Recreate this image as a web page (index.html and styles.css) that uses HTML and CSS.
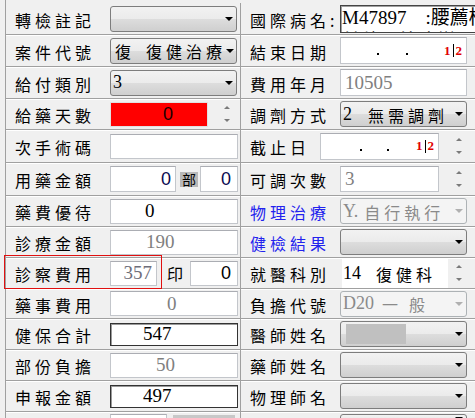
FILE: index.html
```html
<!DOCTYPE html>
<html lang="zh-Hant">
<head>
<meta charset="utf-8">
<link rel="stylesheet" href="styles.css">
</head>
<body>
<div class="form">
  <!-- row 1 -->
  <div class="cell l"><span class="lab">轉檢註記</span><div class="combo"><i class="arr"></i></div></div>
  <div class="cell r"><span class="lab">國際病名:</span><div class="memo">M47897    :腰薦椎
其他關節病變</div></div>
  <!-- row 2 -->
  <div class="cell l"><span class="lab">案件代號</span><div class="combo"><span class="cj">復</span><span class="cj sp">復健治療</span><i class="arr"></i></div></div>
  <div class="cell r"><span class="lab">結束日期</span><div class="in date w127"><i class="dot d1"></i><i class="dot d2"></i><span class="mark"><b>1</b><i class="ibeam"></i><b>2</b></span></div></div>
  <!-- row 3 -->
  <div class="cell l"><span class="lab">給付類別</span><div class="combo"><span class="num">3</span><i class="arr"></i></div></div>
  <div class="cell r"><span class="lab">費用年月</span><div class="in w127 gray pl4">10505</div></div>
  <!-- row 4 -->
  <div class="cell l"><span class="lab">給藥天數</span><div class="in red">0</div><div class="spin"><i class="up"></i><i class="dn"></i></div></div>
  <div class="cell r"><span class="lab">調劑方式</span><div class="combo"><span class="num">2</span><span class="cj sp2">無需調劑</span><i class="arr"></i></div></div>
  <!-- row 5 -->
  <div class="cell l"><span class="lab">次手術碼</span><div class="in w128"></div></div>
  <div class="cell r"><span class="lab short">截止日</span><div class="in date w119"><i class="dot d3"></i><i class="dot d4"></i><span class="mark"><b>1</b><i class="ibeam"></i><b>2</b></span></div><div class="spin sr"><i class="up"></i><i class="dn"></i></div></div>
  <!-- row 6 -->
  <div class="cell l"><span class="lab">用藥金額</span><div class="in sans navy w66 end">0</div><span class="bu">部</span><div class="in sans navy w38 end pr6">0</div></div>
  <div class="cell r"><span class="lab">可調次數</span><div class="in w99 gray pl4">3</div><div class="spin sr"><i class="up"></i><i class="dn"></i></div></div>
  <!-- row 7 -->
  <div class="cell l"><span class="lab">藥費優待</span><div class="in w128 pl34">0</div></div>
  <div class="cell r"><span class="lab blue">物理治療</span><div class="combo dis"><span class="num">Y.</span><span class="cj sp3">自行執行</span><i class="arr"></i></div></div>
  <!-- row 8 -->
  <div class="cell l"><span class="lab">診療金額</span><div class="in w128 gray pl35">190</div></div>
  <div class="cell r"><span class="lab blue">健檢結果</span><div class="combo"><i class="arr"></i></div></div>
  <!-- row 9 -->
  <div class="cell l"><span class="hl"></span><span class="lab">診察費用</span><div class="in w47 gray2 end">357</div><span class="yin">印</span><div class="in sans w48 end pr6">0</div></div>
  <div class="cell r"><span class="lab">就醫科別</span><div class="list"><span class="num">14</span><span class="cj sp4">復健科</span></div><div class="spin sr2"><i class="up"></i><i class="dn"></i></div></div>
  <!-- row 10 -->
  <div class="cell l"><span class="lab">藥事費用</span><div class="in w128 gray pl57">0</div></div>
  <div class="cell r"><span class="lab">負擔代號</span><div class="combo dis"><span class="num">D20</span><span class="cj sp5">一般</span><i class="arr"></i></div></div>
  <!-- row 11 -->
  <div class="cell l"><span class="lab">健保合計</span><div class="in dark w128 pl33">547</div></div>
  <div class="cell r"><span class="lab">醫師姓名</span><div class="combo"><span class="redact"></span><i class="arr"></i></div></div>
  <!-- row 12 -->
  <div class="cell l"><span class="lab">部份負擔</span><div class="in w128 gray pl45">50</div></div>
  <div class="cell r"><span class="lab">藥師姓名</span><div class="combo"><i class="arr"></i></div></div>
  <!-- row 13 -->
  <div class="cell l"><span class="lab">申報金額</span><div class="in dark w128 pl33">497</div></div>
  <div class="cell r"><span class="lab">物理師名</span><div class="combo"><i class="arr"></i></div></div>
  <!-- row 14 -->
  <div class="cell l top"><span class="lab"></span><div class="in w57 stub"></div><span class="grayblk"></span></div>
  <div class="cell r top"><span class="lab"></span><div class="combo stub"><i class="arr"></i></div></div>
</div>
</body>
</html>
```

FILE: styles.css
```css
html, body {
  margin: 0;
  padding: 0;
  background: #f0f0f0;
  overflow: hidden;
}
body {
  width: 475px;
  height: 418px;
}
.form {
  margin-left: 5px;
  padding-top: 3px;
  border-left: 1px solid #a0a0a0;
  box-sizing: border-box;
  height: 418px;
  display: grid;
  grid-template-columns: 234px 235px;
  grid-template-rows: 32px 32px 32px 31px 33px 33px 31px 31px 31px 30px 31px 31px 31px 7px;
}
.cell {
  display: flex;
  align-items: center;
  box-sizing: border-box;
  border-bottom: 1px solid #a0a0a0;
  box-shadow: 0 1px 0 #ffffff;
  position: relative;
  min-width: 0;
}
.cell.top { align-items: flex-start; padding-top: 2px; border-bottom: 0; box-shadow: none; overflow: hidden; }
.l { padding-left: 9px; }
.r { border-left: 1px solid #a0a0a0; padding-left: 9px; }

.lab {
  font-family: "Noto Sans CJK TC", sans-serif;
  font-size: 16px;
  letter-spacing: 4px;
  color: #000;
  flex: none;
  white-space: nowrap;
  padding-top: 2px;
}
.l .lab { width: 95px; }
.r .lab { width: 90px; }
.r .lab.short { width: 70px; }
.blue { color: #2222ee; }

/* combo box (Win7 style) */
.combo {
  box-sizing: border-box;
  flex: none;
  width: 127px;
  height: 26px;
  border: 1px solid #7d7d7d;
  border-radius: 3px;
  background: linear-gradient(#f2f2f2 0%, #ebebeb 50%, #dddddd 50%, #cfcfcf 100%);
  display: flex;
  align-items: center;
  padding-left: 2px;
  overflow: hidden;
  white-space: nowrap;
  color: #000;
}
.combo .arr {
  margin-left: auto;
  margin-right: 3px;
  flex: none;
  width: 0;
  height: 0;
  border-left: 4px solid transparent;
  border-right: 4px solid transparent;
  border-top: 4px solid #000;
}
.combo.dis {
  border-color: #adb2b5;
  background: #f4f4f4;
  color: #8a8a8a;
}
.combo.dis .arr { border-top-color: #b0b0b0; }
.stub { height: 10px; }

.num {
  font-family: "Liberation Serif", serif;
  font-size: 18px;
  flex: none;
}
.cj {
  font-family: "Noto Sans CJK TC", sans-serif;
  font-size: 16px;
  letter-spacing: 4px;
  flex: none;
  padding-top: 1px;
}
.combo .cj:first-child { margin-left: 2px; }
.sp { margin-left: 11px; }
.sp2 { margin-left: 16px; }
.sp3 { margin-left: 6px; }
.sp4 { margin-left: 15px; }
.sp5 { margin-left: 8px; letter-spacing: 11px; }

.redact {
  width: 60px;
  height: 20px;
  margin-left: 3px;
  background: #c0c0c0;
  flex: none;
}

/* text inputs */
.in {
  box-sizing: border-box;
  flex: none;
  height: 25px;
  border: 1px solid #c3c6cb;
  border-top-color: #abadb3;
  background: #fff;
  display: flex;
  align-items: center;
  overflow: hidden;
  white-space: nowrap;
  font-family: "Liberation Serif", serif;
  font-size: 19px;
  color: #000;
}
.in.sans { font-family: "Liberation Sans", sans-serif; font-size: 18px; }
.in.end { justify-content: flex-end; padding-right: 4px; }
.in.pr6 { padding-right: 6px; }
.w127 { width: 127px; height: 27px; }
.w128 { width: 128px; }
.w119 { width: 119px; height: 27px; }
.w99 { width: 99px; height: 26px; }
.w66 { width: 66px; height: 26px; }
.w38 { width: 38px; height: 26px; }
.w47 { width: 47px; }
.w48 { width: 48px; }
.w57 { width: 57px; }
.in.stub { height: 10px; }
.pl4 { padding-left: 4px; }
.pl33 { padding-left: 32px; }
.pl34 { padding-left: 34px; }
.pl35 { padding-left: 35px; }
.pl45 { padding-left: 45px; }
.pl57 { padding-left: 56px; }
.gray { color: #808080; }
.gray2 { color: #6e6e7a; }
.navy { color: #0a0a50; }
.in.red {
  width: 98px;
  height: 25px;
  background: #ff0000;
  border-color: #e0e0e0;
  font-family: "Liberation Sans", sans-serif;
  font-size: 18px;
  color: #200000;
  justify-content: flex-end;
  padding-right: 34px;
}
.in.dark {
  height: 23px;
  border: 1px solid #333;
  box-shadow: inset 1px 1px 0 #9a9a9a;
}

.memo {
  align-self: flex-start;
  margin-top: 2px;
  box-sizing: border-box;
  flex: none;
  width: 135px;
  height: 28px;
  border: 1px solid #444;
  border-right: 0;
  box-shadow: inset 1px 1px 0 #a0a0a0;
  background: #fff;
  font-family: "Liberation Serif", "Noto Sans CJK TC", serif;
  font-size: 19px;
  line-height: 24px;
  white-space: pre;
  overflow: hidden;
  padding-left: 1px;
  color: #000;
}

/* date inputs */
.date { position: relative; }
.dot {
  position: absolute;
  top: 15px;
  width: 2px;
  height: 2px;
  background: #000;
}
.d1 { left: 36px; }
.d2 { left: 65px; }
.d3 { left: 39px; }
.d4 { left: 66px; }
.mark {
  margin-left: auto;
  margin-right: 4px;
  display: flex;
  align-items: center;
  font-family: "Liberation Serif", serif;
  font-size: 13px;
  font-weight: bold;
  color: #e00000;
}
.mark b { font-weight: bold; }
.ibeam {
  width: 1px;
  height: 13px;
  background: #000;
  margin: 0 2px;
}

/* spinner */
.spin {
  flex: none;
  width: 16px;
  height: 26px;
  margin-left: 11px;
  display: flex;
  flex-direction: column;
  align-items: center;
  justify-content: space-around;
}
.spin.sr { margin-left: 12px; }
.spin.sr2 { margin-left: 3px; }
.spin .up, .spin .dn {
  width: 0;
  height: 0;
  border-left: 3px solid transparent;
  border-right: 3px solid transparent;
}
.spin .up { border-bottom: 3px solid #7a7a7a; }
.spin .dn { border-top: 3px solid #7a7a7a; }

.list {
  flex: none;
  box-sizing: border-box;
  width: 106px;
  height: 30px;
  margin-left: 2px;
  background: #fff;
  display: flex;
  align-items: center;
  padding-left: 1px;
  white-space: nowrap;
  overflow: hidden;
}

.bu {
  flex: none;
  margin-left: 4px;
  width: 18px;
  height: 15px;
  background: #b8b8b8;
  font-family: "Noto Sans CJK TC", sans-serif;
  font-size: 14px;
  line-height: 15px;
  text-align: center;
  color: #000;
  margin-right: 2px;
}
.yin {
  flex: none;
  font-family: "Noto Sans CJK TC", sans-serif;
  font-size: 16px;
  margin-left: 10px;
  margin-right: 7px;
  color: #000;
}
.hl {
  position: absolute;
  z-index: 5;
  left: -2px;
  top: -3px;
  width: 158px;
  height: 34px;
  box-sizing: border-box;
  border: 1px solid #e01010;
  pointer-events: none;
}
.grayblk {
  flex: none;
  width: 62px;
  height: 10px;
  margin-left: 6px;
  margin-top: 1px;
  background: #c8c8c8;
}
```
